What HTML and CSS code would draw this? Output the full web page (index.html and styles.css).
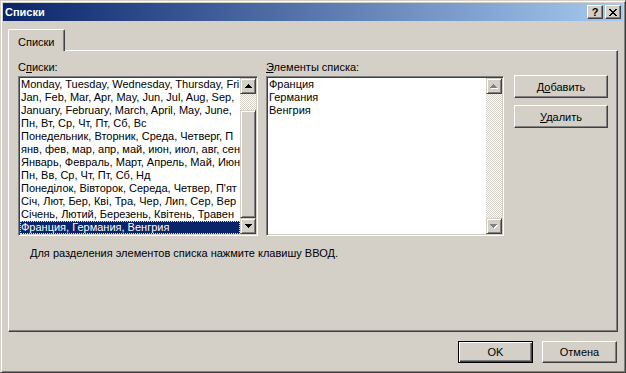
FILE: index.html
```html
<!DOCTYPE html>
<html>
<head>
<meta charset="utf-8">
<link rel="stylesheet" href="styles.css">
</head>
<body>
	<div class="window">
		<div class="titlebar">
			<span class="title">Списки</span>
			<div class="caption-btns">
				<span class="cbtn help">?</span>
				<span class="cbtn close"><svg width="8" height="7" viewBox="0 0 8 7"><path d="M0 0h2v1h-2zM6 0h2v1h-2zM1 1h2v1h-2zM5 1h2v1h-2zM2 2h4v1h-4zM3 3h2v1h-2zM2 4h4v1h-4zM1 5h2v1h-2zM5 5h2v1h-2zM0 6h2v1h-2zM6 6h2v1h-2z" fill="#000"/></svg></span>
			</div>
		</div>
		<div class="client">
			<div class="tabs"><div class="tab active">Списки</div></div>
			<div class="panel">
				<div class="columns">
					<div class="group group-left">
						<div class="label">С<u>п</u>иски:</div>
						<div class="listbox">
							<ul class="rows">
								<li>Monday, Tuesday, Wednesday, Thursday, Fri</li>
								<li>Jan, Feb, Mar, Apr, May, Jun, Jul, Aug, Sep,</li>
								<li>January, February, March, April, May, June,</li>
								<li>Пн, Вт, Ср, Чт, Пт, Сб, Вс</li>
								<li>Понедельник, Вторник, Среда, Четверг, П</li>
								<li>янв, фев, мар, апр, май, июн, июл, авг, сен</li>
								<li>Январь, Февраль, Март, Апрель, Май, Июн</li>
								<li>Пн, Вв, Ср, Чт, Пт, Сб, Нд</li>
								<li>Понеділок, Вівторок, Середа, Четвер, П'ят</li>
								<li>Січ, Лют, Бер, Кві, Тра, Чер, Лип, Сер, Вер</li>
								<li>Січень, Лютий, Березень, Квітень, Травен</li>
								<li class="selected">Франция, Германия, Венгрия</li>
							</ul>
							<div class="scrollbar">
								<div class="sb-btn"><svg width="7" height="4" viewBox="0 0 7 4"><path d="M3 0h1v1h1v1h1v1h1v1h-7v-1h1v-1h1v-1h1z" fill="#000"/></svg></div>
								<div class="sb-track sb-track-top"></div>
								<div class="sb-thumb"></div>
								<div class="sb-btn"><svg width="7" height="4" viewBox="0 0 7 4"><path d="M0 0h7v1h-1v1h-1v1h-1v1h-1v-1h-1v-1h-1v-1h-1z" fill="#000"/></svg></div>
							</div>
						</div>
					</div>
					<div class="group group-right">
						<div class="label"><u>Э</u>лементы списка:</div>
						<div class="listbox">
							<ul class="rows">
								<li>Франция</li>
								<li>Германия</li>
								<li>Венгрия</li>
							</ul>
							<div class="scrollbar">
								<div class="sb-btn"><svg width="8" height="5" viewBox="0 0 8 5"><path d="M4 1h1v1h1v1h1v1h1v1h-7v-1h1v-1h1v-1h1z" fill="#fff"/><path d="M3 0h1v1h1v1h1v1h1v1h-7v-1h1v-1h1v-1h1z" fill="#808080"/></svg></div>
								<div class="sb-track"></div>
								<div class="sb-btn"><svg width="8" height="5" viewBox="0 0 8 5"><path d="M1 1h7v1h-1v1h-1v1h-1v1h-1v-1h-1v-1h-1v-1h-1z" fill="#fff"/><path d="M0 0h7v1h-1v1h-1v1h-1v1h-1v-1h-1v-1h-1v-1h-1z" fill="#808080"/></svg></div>
							</div>
						</div>
					</div>
					<div class="side-buttons">
						<button class="btn">Д<u>о</u>бавить</button>
						<button class="btn"><u>У</u>далить</button>
					</div>
				</div>
				<p class="hint">Для разделения элементов списка нажмите клавишу ВВОД.</p>
			</div>
			<div class="footer">
				<button class="btn btn-small default">OK</button>
				<button class="btn btn-small">Отмена</button>
			</div>
		</div>
	</div>
</body>
</html>
```

FILE: styles.css
```css
body{
	margin: 0;
	background: #d4d0c8;
	font-family: "Liberation Sans", Arial, sans-serif;
	font-size: 11px;
	color: #000;
}
.window{
	width: 626px;
	height: 373px;
	box-sizing: border-box;
	border: 1px solid;
	border-color: #d4d0c8 #404040 #404040 #d4d0c8;
	box-shadow: inset 1px 1px #fff, inset -1px -1px #808080;
	padding: 2px;
	background: #d4d0c8;
	display: flex;
	flex-direction: column;
}
.titlebar{
	height: 18px;
	flex-shrink: 0;
	display: flex;
	align-items: center;
	justify-content: space-between;
	padding: 0 2px 0 2px;
	background: linear-gradient(to right, #0a246a, #a6caf0);
	color: #fff;
}
.title{
	font-weight: bold;
	line-height: 13px;
}
.caption-btns{
	display: flex;
	gap: 2px;
}
.cbtn{
	width: 16px;
	height: 14px;
	box-sizing: border-box;
	display: flex;
	align-items: center;
	justify-content: center;
	background: #d4d0c8;
	border: 1px solid;
	border-color: #fff #404040 #404040 #fff;
	box-shadow: inset -1px -1px #808080;
	color: #000;
	font-weight: bold;
	font-size: 11px;
	line-height: 11px;
}
.client{
	flex: 1;
	display: flex;
	flex-direction: column;
}
.tabs{
	display: flex;
	margin: 8px 5px -1px;
	position: relative;
	z-index: 1;
}
.tab{
	height: 22px;
	box-sizing: border-box;
	padding: 6px 9px 0 9px;
	line-height: 13px;
	background: #d4d0c8;
	border: 1px solid;
	border-bottom: none;
	border-color: #fff #404040 #404040 #fff;
	border-radius: 2px 2px 0 0;
	box-shadow: inset -1px 0 #808080;
}
.panel{
	height: 282px;
	box-sizing: border-box;
	margin: 0 5px;
	border: 1px solid;
	border-color: #fff #404040 #404040 #fff;
	box-shadow: inset -1px -1px #808080;
	padding: 10px 9px 0 9px;
}
.columns{
	display: flex;
}
.group-left{
	width: 240px;
	margin-right: 8px;
}
.group-right{
	width: 238px;
	margin-right: 10px;
}
.label{
	line-height: 13px;
	margin-bottom: 2px;
	white-space: nowrap;
}
.listbox{
	height: 160px;
	box-sizing: border-box;
	display: flex;
	background: #fff;
	border: 1px solid;
	border-color: #808080 #fff #fff #808080;
	box-shadow: inset 1px 1px #404040, inset -1px -1px #d4d0c8;
	padding: 1px;
}
.rows{
	flex: 1;
	list-style: none;
	margin: 0;
	padding: 0;
	overflow: hidden;
	min-width: 0;
}
.rows li{
	line-height: 13px;
	height: 13px;
	padding-left: 1px;
	white-space: nowrap;
	overflow: hidden;
}
.rows .selected{
	background: #0a246a;
	color: #fff;
	outline: 1px dotted #f2df8c;
	outline-offset: -1px;
}
.scrollbar{
	width: 16px;
	flex-shrink: 0;
	display: flex;
	flex-direction: column;
}
.sb-btn,
.sb-thumb{
	box-sizing: border-box;
	background: #d4d0c8;
	border: 1px solid;
	border-color: #d4d0c8 #404040 #404040 #d4d0c8;
	box-shadow: inset 1px 1px #fff, inset -1px -1px #808080;
}
.sb-btn{
	height: 16px;
	flex-shrink: 0;
	display: flex;
	align-items: center;
	justify-content: center;
}
.sb-btn svg{
	display: block;
}
.sb-track{
	flex: 1;
	background: repeating-conic-gradient(#fff 0 25%, #d4d0c8 0 50%) 0 0/2px 2px;
}
.sb-track-top{
	flex: none;
	height: 16px;
}
.sb-thumb{
	flex: 1;
}
.side-buttons{
	display: flex;
	flex-direction: column;
	gap: 7px;
	padding-top: 14px;
}
.btn{
	width: 94px;
	height: 23px;
	box-sizing: border-box;
	background: #d4d0c8;
	border: 1px solid;
	border-color: #fff #404040 #404040 #fff;
	box-shadow: inset -1px -1px #808080;
	font: inherit;
	color: #000;
	padding: 0;
}
.hint{
	margin: 11px 0 0 12px;
	line-height: 13px;
}
.footer{
	display: flex;
	justify-content: flex-end;
	gap: 9px;
	margin-top: 9px;
	padding-right: 6px;
}
.btn-small{
	width: 75px;
	height: 22px;
}
.default{
	border-color: #000;
	box-shadow: inset 1px 1px #fff, inset -1px -1px #404040, inset -2px -2px #808080;
}
```
